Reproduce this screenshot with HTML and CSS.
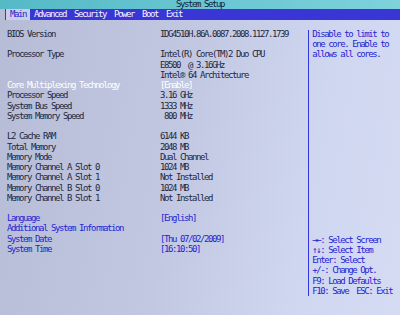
FILE: index.html
```html
<!DOCTYPE html>
<html>
<head>
<meta charset="utf-8">
<link rel="stylesheet" href="styles.css">
</head>
<body>
<div class="screen">
  <div class="titlebar">System Setup</div>
  <div class="menubar">
    <span class="tab active">Main</span>
    <span class="tab">Advanced</span>
    <span class="tab">Security</span>
    <span class="tab">Power</span>
    <span class="tab">Boot</span>
    <span class="tab">Exit</span>
  </div>
  <div class="content">
    <div class="main">
      <div class="row"><span>BIOS Version</span><span>IDG4510H.86A.0087.2008.1127.1739</span></div>
      <div class="blank"></div>
      <div class="row"><span>Processor Type</span><span>Intel(R) Core(TM)2 Duo CPU</span></div>
      <div class="row"><span></span><span>E8500  @ 3.16GHz</span></div>
      <div class="row"><span></span><span>Intel® 64 Architecture</span></div>
      <div class="row sel"><span>Core Multiplexing Technology</span><span>[Enable]</span></div>
      <div class="row"><span>Processor Speed</span><span>3.16 GHz</span></div>
      <div class="row"><span>System Bus Speed</span><span>1333 MHz</span></div>
      <div class="row"><span>System Memory Speed</span><span> 800 MHz</span></div>
      <div class="blank"></div>
      <div class="row"><span>L2 Cache RAM</span><span>6144 KB</span></div>
      <div class="row"><span>Total Memory</span><span>2048 MB</span></div>
      <div class="row"><span>Memory Mode</span><span>Dual Channel</span></div>
      <div class="row"><span>Memory Channel A Slot 0</span><span>1024 MB</span></div>
      <div class="row"><span>Memory Channel A Slot 1</span><span>Not Installed</span></div>
      <div class="row"><span>Memory Channel B Slot 0</span><span>1024 MB</span></div>
      <div class="row"><span>Memory Channel B Slot 1</span><span>Not Installed</span></div>
      <div class="blank"></div>
      <div class="row opt"><span>Language</span><span>[English]</span></div>
      <div class="row opt"><span>Additional System Information</span><span></span></div>
      <div class="row opt"><span>System Date</span><span>[Thu 07/02/2009]</span></div>
      <div class="row opt"><span>System Time</span><span>[16:10:50]</span></div>
    </div>
    <div class="help">
      <div class="help-text">
        <div class="ln">Disable to limit to</div>
        <div class="ln">one core. Enable to</div>
        <div class="ln">allows all cores.</div>
      </div>
      <div class="keys">
        <div class="ln">→←: Select Screen</div>
        <div class="ln">↑↓: Select Item</div>
        <div class="ln">Enter: Select</div>
        <div class="ln">+/-: Change Opt.</div>
        <div class="ln">F9: Load Defaults</div>
        <div class="ln">F10: Save  ESC: Exit</div>
      </div>
    </div>
  </div>
</div>
</body>
</html>
```

FILE: styles.css
```css
html, body {
  margin: 0;
  padding: 0;
}
body {
  width: 400px;
  height: 315px;
  overflow: hidden;
  background: #c6cce4;
}
.screen {
  width: 400px;
  height: 315px;
  display: flex;
  flex-direction: column;
  font-family: "DejaVu Sans Mono", "Liberation Mono", monospace;
  font-size: 9px;
  letter-spacing: -1.42px;
  background: linear-gradient(100deg, #b6bcd5 0%, #c2c8e1 45%, #cfd6ef 75%, #d4dbf3 100%);
  color: #23283f;
}
.titlebar {
  height: 9px;
  line-height: 9px;
  text-align: center;
  color: #14203a;
  background: linear-gradient(90deg, #55b9c6, #6cc8d4 60%, #7ed2dc);
  overflow: hidden;
  white-space: pre;
}
.menubar {
  height: 11px;
  margin-left: 5px;
  display: flex;
  align-items: center;
  padding-left: 1px;
  background: #3a36d6;
  color: #f4f4ff;
}
.tab {
  padding: 0 4px;
  line-height: 11px;
  white-space: pre;
}
.tab.active {
  background: #c9cde6;
  color: #2626d0;
}
.content {
  flex: 1;
  display: flex;
  padding-top: 9px;
  line-height: 10.24px;
  min-height: 0;
}
.main {
  width: 302px;
  padding-left: 7px;
}
.row {
  display: grid;
  grid-template-columns: 153px 1fr;
  height: 10.24px;
}
.row span,
.ln {
  white-space: pre;
  height: 10.24px;
}
.blank {
  height: 10.24px;
}
.row.sel {
  color: #ffffff;
}
.row.opt {
  color: #2424d4;
}
.help {
  width: 88px;
  height: 266px;
  margin-top: 1px;
  border-left: 1px solid #3434de;
  padding-left: 3px;
  display: flex;
  flex-direction: column;
  justify-content: space-between;
  color: #2424d4;
}
.help-text {
  margin-top: -1px;
}
```
